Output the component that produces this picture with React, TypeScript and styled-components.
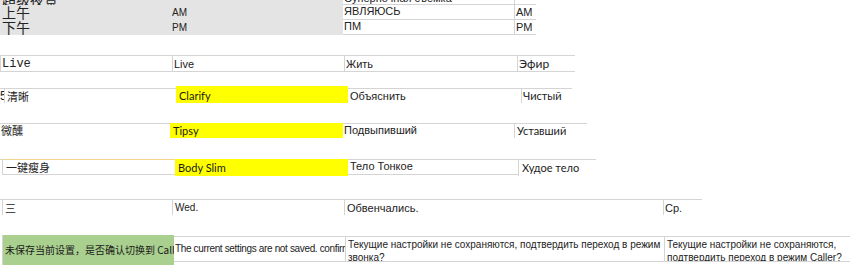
import React from "react";
import styled, { createGlobalStyle } from "styled-components";

const LINE = "#d4d4d4";
const GRAY = "#e4e4e4";
const YELLOW = "#ffff00";
const GREEN = "#a9d08e";

type FontKind = "cjk" | "arial" | "calibri" | "mono";
const families: Record<FontKind, string> = {
  cjk: '"Noto Sans CJK SC", "Liberation Sans", sans-serif',
  arial: '"Liberation Sans", Arial, sans-serif',
  calibri: 'Lato, "Liberation Sans", sans-serif',
  mono: '"Liberation Mono", "Courier New", monospace',
};

const GlobalStyle = createGlobalStyle`
  html, body { margin: 0; padding: 0; background: #ffffff; }
  body { font-family: "Liberation Sans", Arial, sans-serif; color: #222; }
`;

const Page = styled.div`
  width: 850px;
  height: 265px;
  overflow: hidden;
  display: flex;
  flex-direction: column;
`;

const Band = styled.section<{ $gap: number; $h: number }>`
  flex: 0 0 auto;
  margin-top: ${(p) => p.$gap}px;
  height: ${(p) => p.$h}px;
  display: flex;
  flex-direction: column;
  overflow: hidden;
`;

const Row = styled.div<{ $h: number }>`
  flex: 0 0 auto;
  height: ${(p) => p.$h}px;
  display: flex;
  align-items: flex-start;
`;

type CellProps = {
  $w: number;
  $h: number;
  $drop?: number;
  $pl?: number;
  $t?: boolean;
  $b?: boolean;
  $l?: boolean;
  $r?: boolean;
  $tc?: string;
  $font?: FontKind;
  $size?: number;
  $v?: "flex-start" | "center" | "flex-end";
  $justify?: "flex-start" | "flex-end";
  $pt?: number;
  $wrap?: boolean;
  $lh?: number;
  $ls?: number;
};

const Cell = styled.div<CellProps>`
  box-sizing: border-box;
  flex: 0 0 ${(p) => p.$w}px;
  width: ${(p) => p.$w}px;
  height: ${(p) => p.$h}px;
  margin-top: ${(p) => p.$drop ?? 0}px;
  padding-left: ${(p) => p.$pl ?? 2}px;
  padding-top: ${(p) => p.$pt ?? 0}px;
  background: transparent;
  border-top: ${(p) => (p.$t ? `1px solid ${p.$tc ?? LINE}` : "none")};
  border-bottom: ${(p) => (p.$b ? `1px solid ${LINE}` : "none")};
  border-left: ${(p) => (p.$l ? `1px solid ${LINE}` : "none")};
  border-right: ${(p) => (p.$r ? `1px solid ${LINE}` : "none")};
  display: flex;
  align-items: ${(p) => p.$v ?? "center"};
  justify-content: ${(p) => p.$justify ?? "flex-start"};
  overflow: hidden;
  white-space: ${(p) => (p.$wrap ? "normal" : "nowrap")};
  font-family: ${(p) => families[p.$font ?? "arial"]};
  font-size: ${(p) => p.$size ?? 11}px;
  line-height: ${(p) => p.$lh ?? 14}px;
  letter-spacing: ${(p) => p.$ls ?? 0}px;
  color: #222;
`;

const Marked = styled(Cell)<{ $tone: "yellow" | "green" }>`
  background: ${(p) => (p.$tone === "yellow" ? YELLOW : GREEN)};
  color: #1a1a1a;
`;

const Shaded = styled(Cell)`
  background: ${GRAY};
`;

const Txt = styled.span`
  flex: 0 1 auto;
  min-width: 0;
`;

export default function App() {
  return (
    <>
      <GlobalStyle />
      <Page>
        {/* Gray AM / PM block */}
        <Band $gap={0} $h={35}>
          <Row $h={5}>
            <Shaded $w={172} $h={5} $font="cjk" $size={14} $lh={12} $v="flex-end">
              <Txt>超级夜景</Txt>
            </Shaded>
            <Shaded $w={171} $h={5} />
            <Cell $w={171} $h={5} $b $pl={1} $lh={11} $v="flex-end">
              <Txt>Суперночная съёмка</Txt>
            </Cell>
            <Cell $w={22} $h={5} $l $b />
          </Row>
          <Row $h={15}>
            <Shaded $w={172} $h={15} $font="cjk" $size={14} $lh={15}>
              <Txt>上午</Txt>
            </Shaded>
            <Shaded $w={171} $h={15} $pl={0} $size={10}>
              <Txt>AM</Txt>
            </Shaded>
            <Cell $w={171} $h={15} $b $pl={1} $v="flex-start" $lh={13}>
              <Txt>ЯВЛЯЮСЬ</Txt>
            </Cell>
            <Cell $w={22} $h={15} $l $b $pl={1} $v="flex-end" $lh={13}>
              <Txt>AM</Txt>
            </Cell>
          </Row>
          <Row $h={15}>
            <Shaded $w={172} $h={15} $font="cjk" $size={14} $lh={15}>
              <Txt>下午</Txt>
            </Shaded>
            <Shaded $w={171} $h={15} $pl={0} $size={10}>
              <Txt>PM</Txt>
            </Shaded>
            <Cell $w={171} $h={15} $b $pl={1} $v="flex-start" $lh={13}>
              <Txt>ПМ</Txt>
            </Cell>
            <Cell $w={22} $h={15} $l $b $pl={1} $v="flex-end" $lh={13}>
              <Txt>PM</Txt>
            </Cell>
          </Row>
        </Band>

        {/* Live */}
        <Band $gap={20} $h={17}>
          <Row $h={17}>
            <Cell $w={172} $h={17} $t $b $l $font="mono" $size={12} $pl={1}>
              <Txt>Live</Txt>
            </Cell>
            <Cell $w={172} $h={17} $t $b $l $size={11} $pl={1}>
              <Txt>Live</Txt>
            </Cell>
            <Cell $w={173} $h={17} $t $b $l $pl={1}>
              <Txt>Жить</Txt>
            </Cell>
            <Cell $w={58} $h={17} $t $b $l $font="calibri" $size={12} $pl={1}>
              <Txt>Эфир</Txt>
            </Cell>
          </Row>
        </Band>

        {/* Clarify */}
        <Band $gap={14} $h={17}>
          <Row $h={17}>
            <Cell $w={5} $h={15} $drop={2} $t $r $pl={0} $justify="flex-end" $size={12}>
              <Txt>5</Txt>
            </Cell>
            <Cell $w={171} $h={15} $drop={2} $t $font="cjk" $size={11} $pl={2}>
              <Txt>清晰</Txt>
            </Cell>
            <Marked $tone="yellow" $w={172} $h={17} $font="calibri" $size={11} $pl={3} $v="flex-end" $lh={15}>
              <Txt>Clarify</Txt>
            </Marked>
            <Cell $w={173} $h={15} $drop={2} $t $pl={2}>
              <Txt>Объяснить</Txt>
            </Cell>
            <Cell $w={51} $h={15} $drop={2} $t $l $font="calibri" $size={11} $pl={1} $v="flex-end">
              <Txt>Чистый</Txt>
            </Cell>
          </Row>
        </Band>

        {/* Tipsy */}
        <Band $gap={20} $h={15}>
          <Row $h={15}>
            <Cell $w={170} $h={15} $t $font="cjk" $size={11} $pl={1} $v="flex-start" $lh={13}>
              <Txt>微醺</Txt>
            </Cell>
            <Marked $tone="yellow" $w={173} $h={15} $font="calibri" $size={11} $pl={3}>
              <Txt>Tipsy</Txt>
            </Marked>
            <Cell $w={171} $h={15} $t $pl={1} $v="flex-start" $lh={12}>
              <Txt>Подвыпивший</Txt>
            </Cell>
            <Cell $w={73} $h={15} $t $l $font="calibri" $size={11} $pl={2} $v="flex-end">
              <Txt>Уставший</Txt>
            </Cell>
          </Row>
        </Band>

        {/* Body Slim */}
        <Band $gap={21} $h={17}>
          <Row $h={17}>
            <Cell $w={3} $h={16} $r $t />
            <Cell $w={172} $h={16} $t $b $tc="#f2d58a" $font="cjk" $size={11} $pl={3}>
              <Txt>一键瘦身</Txt>
            </Cell>
            <Marked $tone="yellow" $w={173} $h={17} $font="calibri" $size={11} $pl={3}>
              <Txt>Body Slim</Txt>
            </Marked>
            <Cell $w={170} $h={16} $t $b $pl={2} $v="flex-start" $lh={13}>
              <Txt>Тело Тонкое</Txt>
            </Cell>
            <Cell $w={78} $h={17} $t $l $font="calibri" $size={11} $pl={3}>
              <Txt>Худое тело</Txt>
            </Cell>
          </Row>
        </Band>

        {/* Wednesday */}
        <Band $gap={23} $h={16}>
          <Row $h={16}>
            <Cell $w={3} $h={16} $t $r />
            <Cell $w={169} $h={16} $t $font="cjk" $size={11} $pl={2}>
              <Txt>三</Txt>
            </Cell>
            <Cell $w={172} $h={16} $t $l $size={10} $pl={2}>
              <Txt>Wed.</Txt>
            </Cell>
            <Cell $w={319} $h={16} $t $l $pl={2}>
              <Txt>Обвенчались.</Txt>
            </Cell>
            <Cell $w={39} $h={16} $t $l $pl={1}>
              <Txt>Ср.</Txt>
            </Cell>
          </Row>
        </Band>

        {/* Caller prompt */}
        <Band $gap={20} $h={30}>
          <Row $h={30}>
            <Cell $w={2} $h={30} $r />
            <Marked $tone="green" $w={171} $h={30} $font="cjk" $size={10} $pl={2}>
              <Txt>未保存当前设置，是否确认切换到 Caller模式？</Txt>
            </Marked>
            <Cell $w={171} $h={26} $drop={1} $t $b $size={10} $ls={-0.35} $pl={1}>
              <Txt>The current settings are not saved. confirm switching to Caller mode?</Txt>
            </Cell>
            <Cell $w={319} $h={26} $drop={1} $t $b $l $wrap $size={10} $lh={13} $pl={2} $v="flex-start" $pt={1}>
              <Txt>Текущие настройки не сохраняются, подтвердить переход в режим звонка?</Txt>
            </Cell>
            <Cell $w={187} $h={26} $drop={1} $t $b $l $wrap $size={10} $lh={13} $pl={2} $v="flex-start" $pt={1}>
              <Txt>Текущие настройки не сохраняются, подтвердить переход в режим Caller?</Txt>
            </Cell>
          </Row>
        </Band>
      </Page>
    </>
  );
}
